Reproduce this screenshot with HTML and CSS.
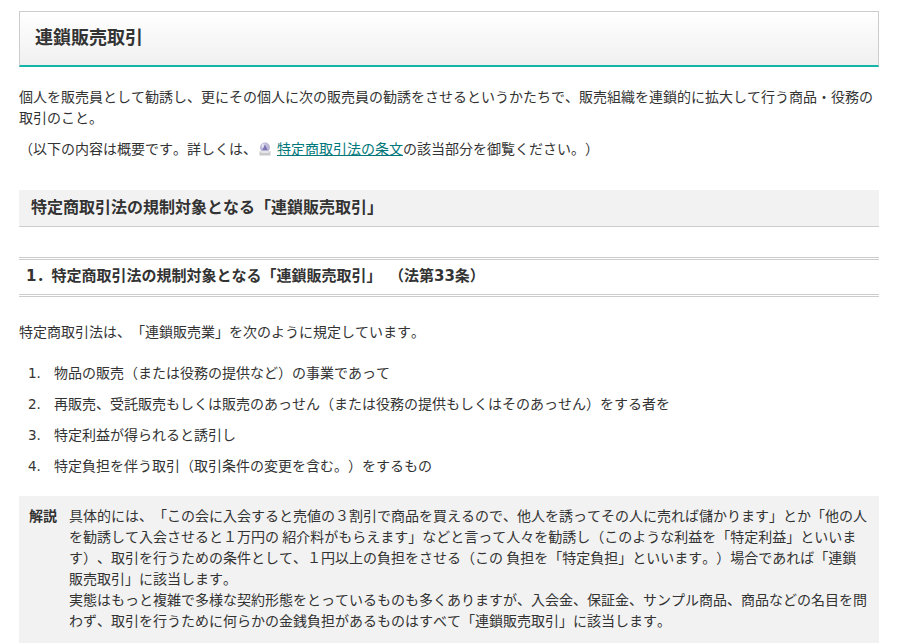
FILE: index.html
```html
<!DOCTYPE html>
<html lang="ja">
<head>
<meta charset="utf-8">
<title>連鎖販売取引</title>
<link rel="stylesheet" href="styles.css">
</head>
<body>
<main class="page">
  <h1 class="title">連鎖販売取引</h1>
  <p class="lead">個人を販売員として勧誘し、更にその個人に次の販売員の勧誘をさせるというかたちで、販売組織を連鎖的に拡大して行う商品・役務の取引のこと。</p>
  <p class="note">（以下の内容は概要です。詳しくは、<svg class="pdf-icon" width="16" height="16" viewBox="0 0 16 16" aria-hidden="true"><circle cx="8" cy="6.5" r="5" fill="#b9b6d6"/><circle cx="7" cy="5" r="2.5" fill="#e4e2f0"/><path d="M8 3 10.5 9H5.5Z" fill="#7a74b4"/><path d="M2.5 10h11v4.5h-11z" fill="#c9c9cc"/><path d="M2.5 10h11l-2 2h-7z" fill="#e6e6e8"/></svg><a class="link" href="#">特定商取引法の条文</a>の該当部分を御覧ください。）</p>
  <h2 class="section">特定商取引法の規制対象となる「連鎖販売取引」</h2>
  <h3 class="sub"><span>1．特定商取引法の規制対象となる「連鎖販売取引」&ensp;（法第33条）</span></h3>
  <p class="intro">特定商取引法は、「連鎖販売業」を次のように規定しています。</p>
  <ol class="steps">
    <li>物品の販売（または役務の提供など）の事業であって</li>
    <li>再販売、受託販売もしくは販売のあっせん（または役務の提供もしくはそのあっせん）をする者を</li>
    <li>特定利益が得られると誘引し</li>
    <li>特定負担を伴う取引（取引条件の変更を含む。）をするもの</li>
  </ol>
  <section class="explain">
    <strong class="explain-label">解説</strong>
    <p class="explain-body">具体的には、「この会に入会すると売値の３割引で商品を買えるので、他人を誘ってその人に売れば儲かります」とか「他の人を勧誘して入会させると１万円の 紹介料がもらえます」などと言って人々を勧誘し（このような利益を「特定利益」といいます）、取引を行うための条件として、１円以上の負担をさせる（この 負担を「特定負担」といいます。）場合であれば「連鎖販売取引」に該当します。<br>実態はもっと複雑で多様な契約形態をとっているものも多くありますが、入会金、保証金、サンプル商品、商品などの名目を問わず、取引を行うために何らかの金銭負担があるものはすべて「連鎖販売取引」に該当します。</p>
  </section>
</main>
</body>
</html>
```
FILE: styles.css
```css
* { box-sizing: border-box; }
html, body { margin: 0; padding: 0; height: 100%; overflow: hidden; }
body {
  background: #fff;
  color: #333;
  font: 14px/21px "Noto Sans CJK JP", sans-serif;
  text-spacing-trim: space-all;
  font-kerning: none;
}
.page { width: 860px; margin-left: 19px; padding-top: 11px; }
.title {
  margin: 0;
  height: 56px;
  padding: 0 15px 4px;
  display: flex;
  align-items: center;
  font-size: 18px;
  font-weight: 700;
  color: #333;
  background: linear-gradient(#fff, #f0f0f0);
  border: 1px solid #ccc;
  border-bottom: 2px solid #13b5a8;
}
.lead { margin: 19px 0 0; }
.note { margin: 10px 0 0; }
.pdf-icon { vertical-align: -3px; margin-right: 4px; }
.link { color: #00777a; text-decoration: underline; }
.section {
  margin: 31px 0 0;
  height: 37px;
  padding: 0 12px 3px;
  display: flex;
  align-items: center;
  background: #f2f2f2;
  border-bottom: 1px solid #ccc;
  font-size: 16px;
  font-weight: 700;
}
.sub {
  margin: 30px 0 0;
  height: 40px;
  padding: 0 7px 1px;
  display: flex;
  align-items: center;
  border-top: 3px double #ccc;
  border-bottom: 3px double #ccc;
  font-family: "DejaVu Sans", "Noto Sans CJK JP", sans-serif;
  font-size: 15px;
  font-weight: 700;
}
.intro { margin: 24px 0 0; }
.steps { margin: 20px 0 0; padding: 0 0 0 9px; list-style: none; counter-reset: step; }
.steps li { display: flex; align-items: baseline; margin-bottom: 10px; counter-increment: step; }
.steps li::before {
  content: counter(step) ".";
  flex: none;
  width: 26px;
  font-family: "DejaVu Sans", sans-serif;
  font-size: 13.5px;
  line-height: 1;
}
.explain {
  margin-top: 20px;
  padding: 9px 10px 12px;
  display: flex;
  gap: 12px;
  background: #f2f2f2;
}
.explain-label { flex: none; font-weight: 700; }
.explain-body { margin: 0; }
```
